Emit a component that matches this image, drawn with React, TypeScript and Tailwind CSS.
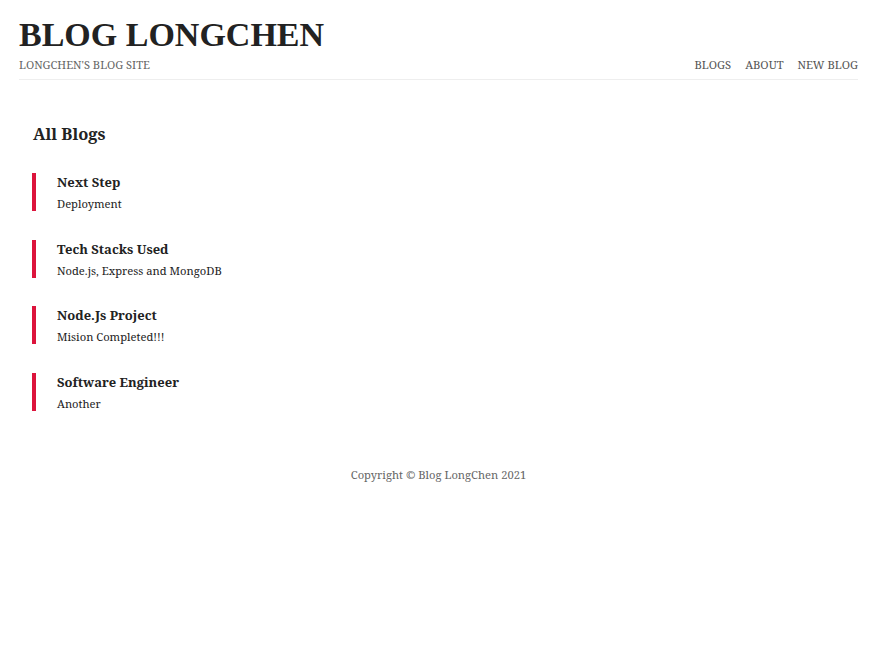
import React from "react";

const blogs = [
  { title: "Next Step", snippet: "Deployment" },
  { title: "Tech Stacks Used", snippet: "Node.js, Express and MongoDB" },
  { title: "Node.Js Project", snippet: "Mision Completed!!!" },
  { title: "Software Engineer", snippet: "Another" },
];

export default function App() {
  return (
    <div className="bg-white min-h-[647px] text-[#222] [font-family:'Noto_Serif','DejaVu_Serif',serif]">
      <div className="mx-[19px]">
        <nav className="flex items-end justify-between pt-[15px] pb-[7px] border-b border-[#eee]">
          <div>
            <h1 className="text-[34px] leading-[40px] font-bold text-[#222] [font-family:'Liberation_Serif',serif]">BLOG LONGCHEN</h1>
            <p className="text-[11.1px] leading-[14px] mt-[3px] text-[#666]">LONGCHEN'S BLOG SITE</p>
          </div>
          <div className="flex gap-[14px] text-[11.2px] leading-[14px] text-[#555]">
            <a>BLOGS</a>
            <a>ABOUT</a>
            <a>NEW BLOG</a>
          </div>
        </nav>
        <div className="px-[13px] pt-[42px]">
          <h2 className="text-[16.5px] leading-[24px] font-bold ml-[1px]">All Blogs</h2>
          <div className="mt-[27px] flex flex-col gap-[28.67px]">
            {blogs.map((b) => (
              <div key={b.title} className="border-l-4 border-[crimson] pl-[21px]">
                <h3 className="text-[13px] leading-[18px] font-bold">{b.title}</h3>
                <p className="text-[11.2px] leading-[15px] mt-[5px]">{b.snippet}</p>
              </div>
            ))}
          </div>
        </div>
        <footer className="text-center text-[11.2px] leading-[14px] text-[#666] mt-[57px]">
          Copyright © Blog LongChen 2021
        </footer>
      </div>
    </div>
  );
}
